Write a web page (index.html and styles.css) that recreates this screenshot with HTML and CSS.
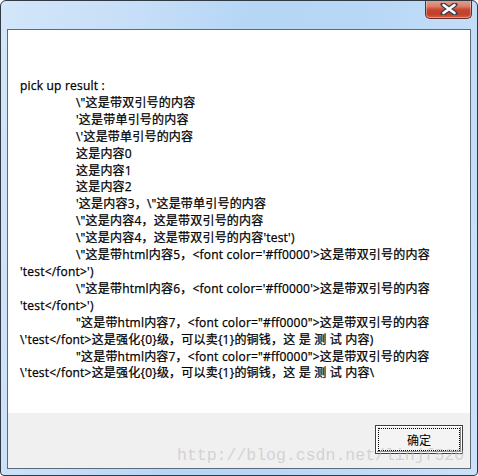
FILE: index.html
```
<!DOCTYPE html>
<html lang="zh-CN">

<head>
	<meta charset="UTF-8">
	<meta name="viewport" content="width=device-width, initial-scale=1.0">
	<title>pick up result</title>
	<link rel="stylesheet" href="styles.css">
</head>

<body>
	<div class="window">
		<div class="titlebar">
			<div class="close">
				<svg width="20" height="12" viewBox="0 0 20 12">
					<path d="M4 1.5 L16 10.5 M16 1.5 L4 10.5" stroke="#3a3f4a" stroke-width="5" stroke-linecap="round" />
					<path d="M4.5 2 L15.5 10 M15.5 2 L4.5 10" stroke="#fff" stroke-width="2.6" stroke-linecap="round" />
				</svg>
			</div>
		</div>
		<div class="client">
			<div class="message">
				<div class="line">pick up result :</div>
				<div class="line tab">\"这是带双引号的内容</div>
				<div class="line tab">'这是带单引号的内容</div>
				<div class="line tab">\'这是带单引号的内容</div>
				<div class="line tab">这是内容0</div>
				<div class="line tab">这是内容1</div>
				<div class="line tab">这是内容2</div>
				<div class="line tab">'这是内容3，\"这是带单引号的内容</div>
				<div class="line tab">\"这是内容4，这是带双引号的内容</div>
				<div class="line tab">\"这是内容4，这是带双引号的内容'test')</div>
				<div class="line tab">\"这是带html内容5，&lt;font color='#ff0000'&gt;这是带双引号的内容</div>
				<div class="line">'test&lt;/font&gt;')</div>
				<div class="line tab">\"这是带html内容6，&lt;font color='#ff0000'&gt;这是带双引号的内容</div>
				<div class="line">'test&lt;/font&gt;')</div>
				<div class="line tab">"这是带html内容7，&lt;font color="#ff0000"&gt;这是带双引号的内容</div>
				<div class="line">\'test&lt;/font&gt;这是强化{0}级，可以卖{1}的铜钱，这 是 测 试 内容)</div>
				<div class="line tab">"这是带html内容7，&lt;font color="#ff0000"&gt;这是带双引号的内容</div>
				<div class="line">\'test&lt;/font&gt;这是强化{0}级，可以卖{1}的铜钱，这 是 测 试 内容\</div>
			</div>
			<div class="footer">
				<button class="ok"><span class="focus">确定</span></button>
				<div class="watermark">http://blog.csdn.net/linjf520</div>
			</div>
		</div>
	</div>
</body>

</html>
```
FILE: styles.css
```
* {
	box-sizing: border-box;
}

body {
	margin: 0;
	background: #fff;
}

.window {
	width: 478px;
	height: 476px;
	border: 1px solid #2f3a45;
	border-radius: 6px 6px 4px 4px;
	background: linear-gradient(100deg, #d3e6fa 0%, #c6def7 25%, #b6d6f6 45%, #b8d7f6 65%, #cbe2f9 100%);
	padding: 0 6px 6px 6px;
	display: flex;
	flex-direction: column;
	overflow: hidden;
}

.titlebar {
	height: 28px;
	display: flex;
	justify-content: flex-end;
	flex-shrink: 0;
}

.close {
	width: 47px;
	height: 19px;
	margin-right: -1px;
	margin-top: -1px;
	border: 1px solid #6a2b22;
	border-top: none;
	border-radius: 0 0 5px 5px;
	background: linear-gradient(#e6a493 0%, #d9806b 35%, #c7432e 55%, #c2402b 80%, #d4634c 100%);
	box-shadow: inset 0 0 0 1px rgba(255, 255, 255, 0.35);
	display: flex;
	align-items: center;
	justify-content: center;
}

.client {
	flex: 1;
	border: 1px solid #5c6b7b;
	background: #fff;
	display: flex;
	flex-direction: column;
}

.message {
	flex: 1;
	padding: 48px 0 0 12px;
	font-family: "Open Sans", "Noto Sans CJK SC", sans-serif;
	font-size: 12px;
	line-height: 16.9px;
	color: #000;
	white-space: nowrap;
	letter-spacing: 0.2px;
	-webkit-text-stroke: 0.25px #000;
}

.line.tab {
	padding-left: 56px;
}

.footer {
	height: 55px;
	background: #f0f0f0;
	position: relative;
	display: flex;
	justify-content: flex-end;
	padding: 12px 7px 0 0;
}

.ok {
	width: 88px;
	height: 29px;
	padding: 2px;
	border: 1px solid #3f3f3f;
	box-shadow: inset 0 0 0 1px #fff, inset -1px -1px 0 1px #8a8a8a;
	background: #f4f4f4;
	font-family: "Noto Sans CJK SC", sans-serif;
	font-size: 12px;
	color: #000;
}

.focus {
	display: flex;
	align-items: center;
	justify-content: center;
	height: 100%;
	border: 1px dotted #000;
}

.watermark {
	position: absolute;
	left: 169px;
	top: 33px;
	font-family: "Liberation Mono", monospace;
	font-size: 16.5px;
	color: rgba(190, 190, 190, 0.6);
	pointer-events: none;
}
```
